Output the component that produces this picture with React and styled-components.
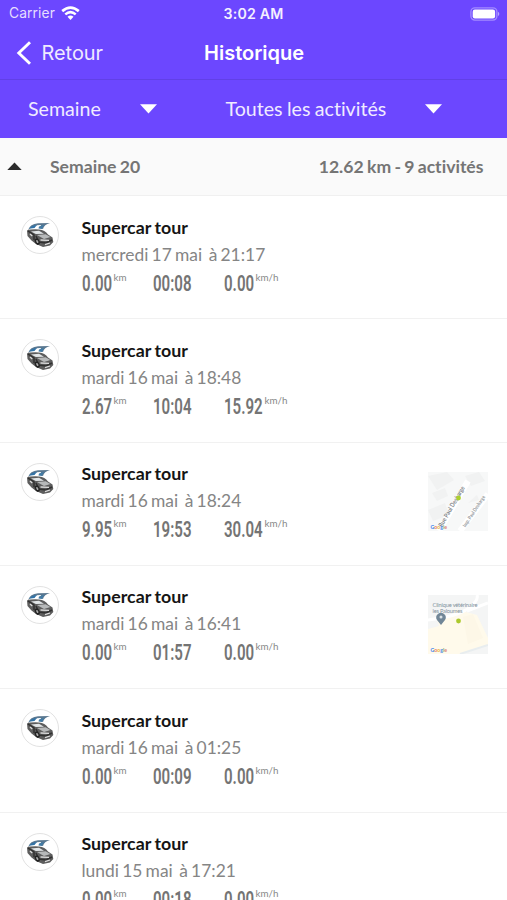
import React from "react";
import styled, { createGlobalStyle } from "styled-components";

const GlobalStyle = createGlobalStyle`
  * { box-sizing: border-box; }
  html, body { margin: 0; height: 900px; overflow: hidden; background: #fff; }
`;

const Screen = styled.main`
  width: 507px;
  height: 900px;
  overflow: hidden;
  display: flex;
  flex-direction: column;
  background: #fff;
  font-family: Lato, sans-serif;
  font-variant-ligatures: none;
`;

const Header = styled.header`
  flex: none;
  height: 137.5px;
  background: #6c47ff;
  color: #fff;
`;

const StatusBar = styled.div`
  height: 27px;
  padding: 0 7px 0 9px;
  display: grid;
  grid-template-columns: 1fr auto 1fr;
  align-items: center;
  font: 400 13.8px/27px Inter, sans-serif;
`;

const Carrier = styled.div`
  display: flex;
  align-items: center;
  gap: 6.5px;
  color: #e6defe;
  letter-spacing: 0.1px;
`;

const Clock = styled.time`
  margin-left: -2px;
  font-size: 14.2px;
  font-weight: 600;
  letter-spacing: 0.15px;
  color: #f3efff;
`;

const BatteryIcon = styled.svg`
  justify-self: end;
`;

const NavBar = styled.nav`
  height: 53px;
  padding: 1px 0 2px 16px;
  border-bottom: 1px solid #6140e6;
  display: grid;
  grid-template-columns: 188px auto;
  align-items: center;
  font-family: Inter, sans-serif;
`;

const BackButton = styled.button`
  display: flex;
  align-items: center;
  gap: 9.5px;
  padding: 0;
  border: 0;
  background: none;
  color: #efeaff;
  font: 400 19.9px/26px Inter, sans-serif;
`;

const Title = styled.h1`
  margin: 0;
  font-size: 20px;
  font-weight: 600;
  line-height: 26px;
  letter-spacing: 0;
`;

const Filters = styled.div`
  height: 58px;
  display: flex;
  align-items: center;
  gap: 69px;
  padding-left: 28px;
`;

const Filter = styled.button`
  flex: none;
  display: flex;
  align-items: center;
  justify-content: space-between;
  width: ${(p) => p.$width}px;
  padding: 0;
  border: 0;
  background: none;
  color: #f0ebff;
  font: 400 19.6px/26px Lato, sans-serif;
  font-variant-ligatures: none;
  word-spacing: -0.6px;
  white-space: nowrap;
`;

const WeekBar = styled.section`
  flex: none;
  height: 58.5px;
  padding: 0 23.5px 0 7px;
  display: flex;
  align-items: center;
  background: #fafafa;
  border-bottom: 1px solid #f0f0f0;
  color: #757575;
  font-size: 17.6px;
  font-weight: 700;
  word-spacing: -1px;
  white-space: nowrap;
`;

const WeekName = styled.span`
  margin-left: 28px;
  flex: 1;
`;

const List = styled.ul`
  margin: 0;
  padding: 0;
  list-style: none;
`;

const Row = styled.li`
  height: 123.33px;
  padding: 20px 19px 0 21px;
  display: grid;
  grid-template-columns: 60.5px 1fr 60px;
  align-items: start;
  border-bottom: 1.5px solid #f1f1f1;
`;

const Avatar = styled.div`
  width: 38px;
  height: 38px;
  border: 1.5px solid #e2e2e2;
  border-radius: 50%;
  display: grid;
  place-items: center;
`;

const Name = styled.h2`
  margin: -1.5px 0 0;
  color: #151515;
  font-size: 17.8px;
  font-weight: 700;
  line-height: 24px;
  word-spacing: -0.8px;
`;

const When = styled.p`
  margin: 3px 0 0;
  color: #858585;
  font-size: 17.4px;
  line-height: 26px;
  word-spacing: -1.2px;
  white-space: pre;
`;

const Stats = styled.div`
  display: grid;
  grid-template-columns: 71px 71px auto;
  margin: 2px 0 0;
`;

const Stat = styled.div`
  display: flex;
  height: 28px;
`;

const Value = styled.span`
  width: ${(p) => (p.$wide ? 39 : 30)}px;
  white-space: nowrap;
`;

const Digits = styled.span`
  display: inline-block;
  color: #747474;
  font: 600 22px/28px Roboto, sans-serif;
  transform: scaleX(0.685);
  transform-origin: left center;
`;

const Unit = styled.sup`
  margin-left: 2px;
  margin-top: -1px;
  color: #888;
  font: 400 9.8px/16px Lato, sans-serif;
`;

const MapThumb = styled.svg`
  display: block;
  margin-top: 9px;
`;

const Wifi = () => (
  <svg width="19" height="15" viewBox="0 0 19 15" fill="none" stroke="#fff">
    <path d="M1.2 5.1Q9.5-1.9 17.8 5.1" strokeWidth="2.7" />
    <path d="M4.3 8.4Q9.5 3.9 14.7 8.4" strokeWidth="2.5" />
    <path d="M6.5 10.8Q9.5 8.2 12.5 10.8L9.5 14Z" fill="#fff" stroke="none" />
  </svg>
);

const Battery = () => (
  <BatteryIcon width="30" height="14" viewBox="0 0 30 14">
    <rect x=".9" y=".9" width="26" height="12.2" rx="4" fill="none" stroke="#a28bff" strokeWidth="1.4" />
    <rect x="2.7" y="2.5" width="22.4" height="9" rx="2.2" fill="#fff" />
    <path d="M28 4.8Q30.6 7 28 9.2Z" fill="#b5a3ff" />
  </BatteryIcon>
);

const Chevron = () => (
  <svg width="16" height="24" viewBox="0 0 16 24" fill="none" stroke="#fff" strokeWidth="2.9">
    <path d="M14 1.2 2.8 12 14 22.8" />
  </svg>
);

const DownCaret = () => (
  <svg width="17" height="10" viewBox="0 0 17 10">
    <path d="M0 .2h17L8.5 9.4Z" fill="#fff" />
  </svg>
);

const UpCaret = () => (
  <svg width="15" height="8" viewBox="0 0 15 8">
    <path d="M.3 7.9 7.5.5l7.2 7.4Z" fill="#2b2b2b" />
  </svg>
);

const CarLogo = () => (
  <svg width="28" height="26" viewBox="0 0 28 26">
    <path d="M2 8Q4 2 12 1.2L24 1Q18 2.4 17 7L14 6 15 3Q8 2.7 2 8Z" fill="#5b7890" />
    <path d="M3 6.7Q6 3 11 3L8.5 6Z" fill="#3273a7" />
    <path d="M13 4.4 18 2.8 16 7 12.5 6.5Z" fill="#427ba5" />
    <path d="M1 8.4Q4 7 13 7.4 19 8 22 12.5L26.5 15.5 27.3 20 24 23.5 17 25 10 22 5.5 18.5 1.5 14Z" fill="#5d5d5d" />
    <path d="M5 9.4 13 8.8 18 11.7 9.8 12.1Z" fill="#e2e6e8" />
    <path d="M11 13.1 19.6 12.3 24.5 15.1 18 17.1Z" fill="#b7b9ba" />
    <path d="M2 9 8 13 8 18M10 14 13 20 20 21 26 18" fill="none" stroke="#303030" strokeWidth="1.5" />
    <path d="M4 12 6.2 14M14.5 18 23 18.3M19 22.7 24 21" stroke="#ddd" strokeWidth="1.3" />
    <ellipse cx="11.2" cy="19.7" rx="2.2" ry="3.3" fill="#222" transform="rotate(-28 11.2 19.7)" />
    <ellipse cx="11.3" cy="19.5" rx=".9" ry="1.7" fill="#aaa" transform="rotate(-28 11.3 19.5)" />
  </svg>
);

const GoogleMark = () => (
  <text x="2.5" y="57" fontFamily="Lato, sans-serif" fontSize="6" fontWeight="700" textLength="16.5" lengthAdjust="spacingAndGlyphs">
    <tspan fill="#3b82ec">G</tspan><tspan fill="#e77869">o</tspan><tspan fill="#e6b739">o</tspan><tspan fill="#4b89e4">g</tspan><tspan fill="#77ac7b">l</tspan><tspan fill="#dc8075">e</tspan>
  </text>
);

const StreetMap = () => (
  <MapThumb width="60" height="59" viewBox="0 0 60 59">
    <rect width="60" height="59" fill="#f7f8f8" />
    <path d="M0 4 19 0 26 8 9 18ZM37 4 51 0 57 9 43 14ZM4 21 17 16 20 24 9 29ZM0 38 17 31 21 43 5 49ZM40 31 49 23 51 28Z" fill="#f1f2f2" />
    <path d="M11 59 40 9M32 59 60 22" stroke="#fff" strokeWidth="6" />
    <g fontFamily="Lato, sans-serif">
      <text transform="translate(14 55.5) rotate(-60)" fontSize="6.4" fontWeight="700" fill="#7f858a" textLength="46" lengthAdjust="spacingAndGlyphs">Rue Paul Desbarge</text>
      <text transform="translate(37.5 55.5) rotate(-57)" fontSize="5.2" fontWeight="700" fill="#92979b" textLength="36.5" lengthAdjust="spacingAndGlyphs">Imp. Paul Desbarge</text>
    </g>
    <circle cx="30.5" cy="26" r="2.4" fill="#acd02c" />
    <GoogleMark />
  </MapThumb>
);

const ClinicMap = () => (
  <MapThumb width="60" height="59" viewBox="0 0 60 59">
    <rect width="60" height="59" fill="#f4f5f5" />
    <path d="M0 34 11 31 9 24 24 20 27 14 49 20 60 43V50L35 59H0Z" fill="#fffaeb" />
    <path d="M35 22 45 19 55 43 40 49Z" fill="#fdf7e7" />
    <path d="M0 25Q31 21 41 13T49 0M39 16 60 8" stroke="#fff" strokeWidth="3" fill="none" />
    <path d="M32 59 60 50" stroke="#e8edef" strokeWidth="2" />
    <g fill="#82919c" fontFamily="Lato, sans-serif" fontSize="5.7">
      <text x="4.5" y="12" textLength="45">Clinique vétérinaire</text>
      <text x="4.5" y="18" textLength="30">les Paloumes</text>
    </g>
    <path d="M13 30 9 25A4.7 4.7 0 1 1 17 25Z" fill="#718697" />
    <circle cx="13" cy="22" r="1.5" fill="#dbe2e6" />
    <circle cx="30.5" cy="26" r="2.4" fill="#acc92d" />
    <GoogleMark />
  </MapThumb>
);

const activities = [
  { when: "mercredi 17 mai  à 21:17", km: "0.00", time: "00:08", speed: "0.00" },
  { when: "mardi 16 mai  à 18:48", km: "2.67", time: "10:04", speed: "15.92" },
  { when: "mardi 16 mai  à 18:24", km: "9.95", time: "19:53", speed: "30.04", Map: StreetMap },
  { when: "mardi 16 mai  à 16:41", km: "0.00", time: "01:57", speed: "0.00", Map: ClinicMap },
  { when: "mardi 16 mai  à 01:25", km: "0.00", time: "00:09", speed: "0.00" },
  { when: "lundi 15 mai  à 17:21", km: "0.00", time: "00:18", speed: "0.00" },
];

const Metric = ({ value, unit }) => (
  <Stat>
    <Value $wide={value.length > 4}><Digits>{value}</Digits></Value>
    {unit && <Unit>{unit}</Unit>}
  </Stat>
);

const Activity = ({ when, km, time, speed, Map }) => (
  <Row>
    <Avatar><CarLogo /></Avatar>
    <div>
      <Name>Supercar tour</Name>
      <When>{when}</When>
      <Stats>
        <Metric value={km} unit="km" />
        <Metric value={time} />
        <Metric value={speed} unit="km/h" />
      </Stats>
    </div>
    {Map && <Map />}
  </Row>
);

export default function App() {
  return (
    <Screen>
      <GlobalStyle />
      <Header>
        <StatusBar>
          <Carrier>Carrier <Wifi /></Carrier>
          <Clock>3:02 AM</Clock>
          <Battery />
        </StatusBar>
        <NavBar>
          <BackButton><Chevron />Retour</BackButton>
          <Title>Historique</Title>
        </NavBar>
        <Filters>
          <Filter $width={128.5}>Semaine<DownCaret /></Filter>
          <Filter $width={216}>Toutes les activités<DownCaret /></Filter>
        </Filters>
      </Header>
      <WeekBar>
        <UpCaret />
        <WeekName>Semaine 20</WeekName>
        <span>12.62 km - 9 activités</span>
      </WeekBar>
      <List>
        {activities.map((item) => <Activity key={item.when} {...item} />)}
      </List>
    </Screen>
  );
}
